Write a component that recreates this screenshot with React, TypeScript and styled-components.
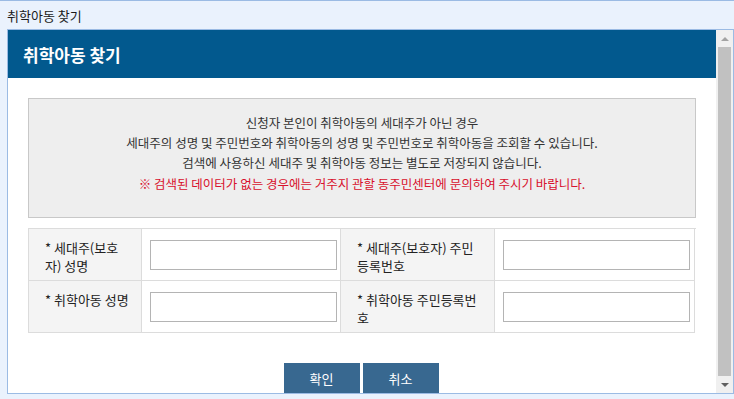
import React from 'react';
import styled, { createGlobalStyle } from 'styled-components';

const GlobalStyle = createGlobalStyle`
  html, body {
    margin: 0;
    padding: 0;
    background: #eaf2fd;
    font-family: 'Noto Sans CJK KR', 'Noto Sans', sans-serif;
  }
`;

const Window = styled.div`
  width: 734px;
  height: 399px;
  background: #eaf2fd;
  border-top: 1px solid #9bbbe4;
  box-sizing: border-box;
  display: flex;
  flex-direction: column;
  overflow: hidden;
`;

const TitleBar = styled.div`
  height: 28px;
  padding-left: 7px;
  display: flex;
  align-items: center;
  font-size: 13px;
  color: #1a1a1a;
`;

const Frame = styled.div`
  margin-left: 7px;
  width: 727px;
  height: 365px;
  box-sizing: border-box;
  border: 1px solid #9bbbe4;
  background: #ffffff;
  display: flex;
  overflow: hidden;
`;

const Content = styled.div`
  flex: 1;
  display: flex;
  flex-direction: column;
  overflow: hidden;
`;

const Header = styled.div`
  height: 48px;
  flex-shrink: 0;
  background: #02598e;
  color: #ffffff;
  font-size: 17px;
  font-weight: bold;
  display: flex;
  align-items: center;
  padding-left: 15px;
`;

const Body = styled.div`
  padding: 20px 20px 0 20px;
  display: flex;
  flex-direction: column;
`;

const InfoBox = styled.div`
  height: 120px;
  box-sizing: border-box;
  border: 1px solid #c8c8c8;
  background: #eeeeee;
  padding-top: 14px;
  text-align: center;
  font-size: 12.5px;
  line-height: 20px;
  color: #333333;
`;

const InfoLine = styled.div<{ $warn?: boolean }>`
  color: ${(p) => (p.$warn ? '#d8102c' : '#333333')};
  margin-top: ${(p) => (p.$warn ? '1px' : '0')};
`;

const FormTable = styled.div`
  margin-top: 10px;
  display: grid;
  grid-template-columns: 113px 199px 154px 200px;
  border-top: 1px solid #dcdcdc;
  border-left: 1px solid #dcdcdc;
`;

const LabelCell = styled.div`
  height: 52px;
  background: #f4f4f4;
  border-right: 1px solid #dcdcdc;
  border-bottom: 1px solid #dcdcdc;
  padding: 10px 0 0 16px;
  box-sizing: border-box;
  font-size: 13px;
  line-height: 18px;
  color: #222222;
`;

const InputCell = styled.div`
  height: 52px;
  background: #ffffff;
  border-right: 1px solid #dcdcdc;
  border-bottom: 1px solid #dcdcdc;
  padding: 11px 0 0 8px;
  box-sizing: border-box;
`;

const TextInput = styled.input`
  width: 187px;
  height: 30px;
  box-sizing: border-box;
  border: 1px solid #b4b4b4;
  background: #ffffff;
  outline: none;
  padding: 0 6px;
  font-size: 13px;
`;

const ButtonRow = styled.div`
  margin-top: 30px;
  display: flex;
  justify-content: center;
  gap: 3px;
  padding-right: 2px;
`;

const ActionButton = styled.button`
  width: 76px;
  height: 32px;
  border: none;
  background: #386890;
  color: #ffffff;
  font-family: inherit;
  font-size: 13px;
  padding: 0 0 2px 0;
  cursor: pointer;
`;

const Scrollbar = styled.div`
  width: 17px;
  flex-shrink: 0;
  background: #f0f0f0;
  display: flex;
  flex-direction: column;
  align-items: center;
`;

const Arrow = styled.div<{ $down?: boolean; $color: string }>`
  height: 17px;
  width: 17px;
  display: flex;
  align-items: center;
  justify-content: center;
  &::before {
    content: '';
    border-left: 4px solid transparent;
    border-right: 4px solid transparent;
    ${(p) =>
      p.$down
        ? `border-top: 4px solid ${p.$color};`
        : `border-bottom: 4px solid ${p.$color};`}
  }
`;

const Thumb = styled.div`
  flex: 1;
  width: 13px;
  background: #c1c1c1;
`;

const fields = [
  { label: ['* 세대주(보호', '자) 성명'] },
  { label: ['* 세대주(보호자) 주민', '등록번호'] },
  { label: ['* 취학아동 성명'] },
  { label: ['* 취학아동 주민등록번', '호'] },
];

const App: React.FC = () => {
  return (
    <>
      <GlobalStyle />
      <Window>
        <TitleBar>취학아동 찾기</TitleBar>
        <Frame>
          <Content>
            <Header>취학아동 찾기</Header>
            <Body>
              <InfoBox>
                <InfoLine>신청자 본인이 취학아동의 세대주가 아닌 경우</InfoLine>
                <InfoLine>세대주의 성명 및 주민번호와 취학아동의 성명 및 주민번호로 취학아동을 조회할 수 있습니다.</InfoLine>
                <InfoLine>검색에 사용하신 세대주 및 취학아동 정보는 별도로 저장되지 않습니다.</InfoLine>
                <InfoLine $warn>※ 검색된 데이터가 없는 경우에는 거주지 관할 동주민센터에 문의하여 주시기 바랍니다.</InfoLine>
              </InfoBox>

              <FormTable>
                {fields.map((f, i) => (
                  <React.Fragment key={i}>
                    <LabelCell>
                      {f.label.map((line, j) => (
                        <div key={j}>{line}</div>
                      ))}
                    </LabelCell>
                    <InputCell>
                      <TextInput type="text" />
                    </InputCell>
                  </React.Fragment>
                ))}
              </FormTable>

              <ButtonRow>
                <ActionButton>확인</ActionButton>
                <ActionButton>취소</ActionButton>
              </ButtonRow>
            </Body>
          </Content>
          <Scrollbar>
            <Arrow $color="#a3a3a3" />
            <Thumb />
            <Arrow $down $color="#606060" />
          </Scrollbar>
        </Frame>
      </Window>
    </>
  );
};

export default App;
